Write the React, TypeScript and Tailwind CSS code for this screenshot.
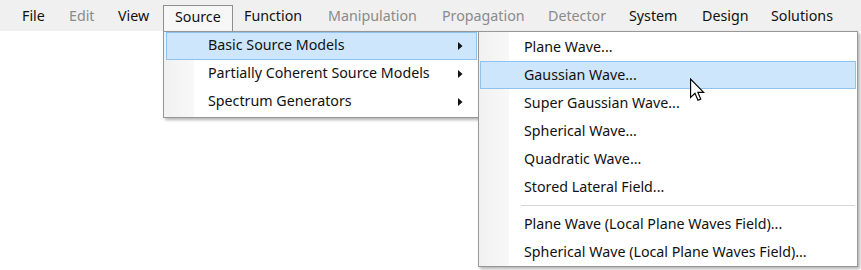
import React from "react";

const bar: { label: string; w: number; disabled?: boolean; active?: boolean }[] = [
  { label: "File", w: 47 },
  { label: "Edit", w: 49, disabled: true },
  { label: "View", w: 56 },
  { label: "Source", w: 70, active: true },
  { label: "Function", w: 84 },
  { label: "Manipulation", w: 114, disabled: true },
  { label: "Propagation", w: 106, disabled: true },
  { label: "Detector", w: 81, disabled: true },
  { label: "System", w: 73 },
  { label: "Design", w: 69 },
  { label: "Solutions", w: 80 },
];

const sub1 = ["Basic Source Models", "Partially Coherent Source Models", "Spectrum Generators"];
const sub2a = [
  "Plane Wave...",
  "Gaussian Wave...",
  "Super Gaussian Wave...",
  "Spherical Wave...",
  "Quadratic Wave...",
  "Stored Lateral Field...",
];
const sub2b = ["Plane Wave (Local Plane Waves Field)...", "Spherical Wave (Local Plane Waves Field)..."];

function Arrow() {
  return (
    <svg width="5" height="8" viewBox="0 0 5 8" className="block">
      <path d="M0 0 L4.5 4 L0 8 Z" fill="#111" />
    </svg>
  );
}

function Cursor() {
  return (
    <svg width="15" height="24" viewBox="0 0 13 20" className="block">
      <path
        d="M0.5 0.5 L0.5 16.5 L4.3 12.9 L6.9 18.9 L9.3 17.9 L6.8 12 L11.8 12 Z"
        fill="#fff"
        stroke="#000"
        strokeWidth="1"
        strokeLinejoin="miter"
      />
    </svg>
  );
}

export default function App() {
  const font = { fontFamily: '"Noto Sans", "Open Sans", sans-serif' };
  return (
    <div className="relative w-[861px] h-[270px] bg-white overflow-hidden text-[14.25px] text-[#111]" style={font}>
      <div className="flex h-[31px] bg-[#f0f0f0] pl-[11px]">
        {bar.map((b) => (
          <div
            key={b.label}
            className={
              "flex items-center pl-[11px] " +
              (b.active
                ? "mt-[5px] border border-b-0 border-[#8e8e8e] bg-[#f7f7f7] pl-[10px] "
                : "") +
              (b.disabled ? "text-[#8a8a8a]" : "text-[#111]")
            }
            style={{ width: b.w }}
          >
            <span className={b.active ? "-mt-[3px] leading-none" : "leading-none mt-[2px]"}>{b.label}</span>
          </div>
        ))}
      </div>

      {/* first dropdown */}
      <div className="absolute left-[163px] top-[31px] w-[317px] border border-[#979797] bg-white pb-[1px] shadow-[2px_2px_3px_rgba(0,0,0,0.3)]">
        <div className="absolute left-0 top-0 bottom-0 w-[30px] bg-gradient-to-r from-[#f1f1f1] to-[#f8f8f8]" />
        <div className="relative flex flex-col px-[2px]">
          {sub1.map((s, i) => (
            <div
              key={s}
              className={
                "flex h-[28px] items-center justify-between pl-[41px] pr-[13px] border " +
                (i === 0 ? "bg-[#cde6fb] border-[#8ec3f1]" : "border-transparent")
              }
            >
              <span className="leading-none -mt-[1px]">{s}</span>
              <Arrow />
            </div>
          ))}
        </div>
      </div>

      {/* second dropdown */}
      <div className="absolute left-[478px] top-[31px] w-[380px] border border-[#979797] bg-white pt-[1px] shadow-[2px_2px_3px_rgba(0,0,0,0.3)]">
        <div className="absolute left-0 top-0 bottom-0 w-[30px] bg-gradient-to-r from-[#f1f1f1] to-[#f8f8f8]" />
        <div className="relative flex flex-col px-[1px]">
          {sub2a.map((s, i) => (
            <div
              key={s}
              className={
                "flex h-[28px] items-center pl-[43px] border " +
                (i === 1 ? "bg-[#cde6fb] border-[#8ec3f1]" : "border-transparent")
              }
            >
              <span className="leading-none">{s}</span>
            </div>
          ))}
          <div className="flex h-[9px] items-center pl-[41px] pr-[1px]">
            <div className="h-[1px] w-full bg-[#d7d7d7]" />
          </div>
          {sub2b.map((s) => (
            <div key={s} className="flex h-[28px] items-center pl-[43px] border border-transparent">
              <span className="leading-none">{s}</span>
            </div>
          ))}
        </div>
      </div>

      <div className="absolute left-[690px] top-[78px]">
        <Cursor />
      </div>
    </div>
  );
}
